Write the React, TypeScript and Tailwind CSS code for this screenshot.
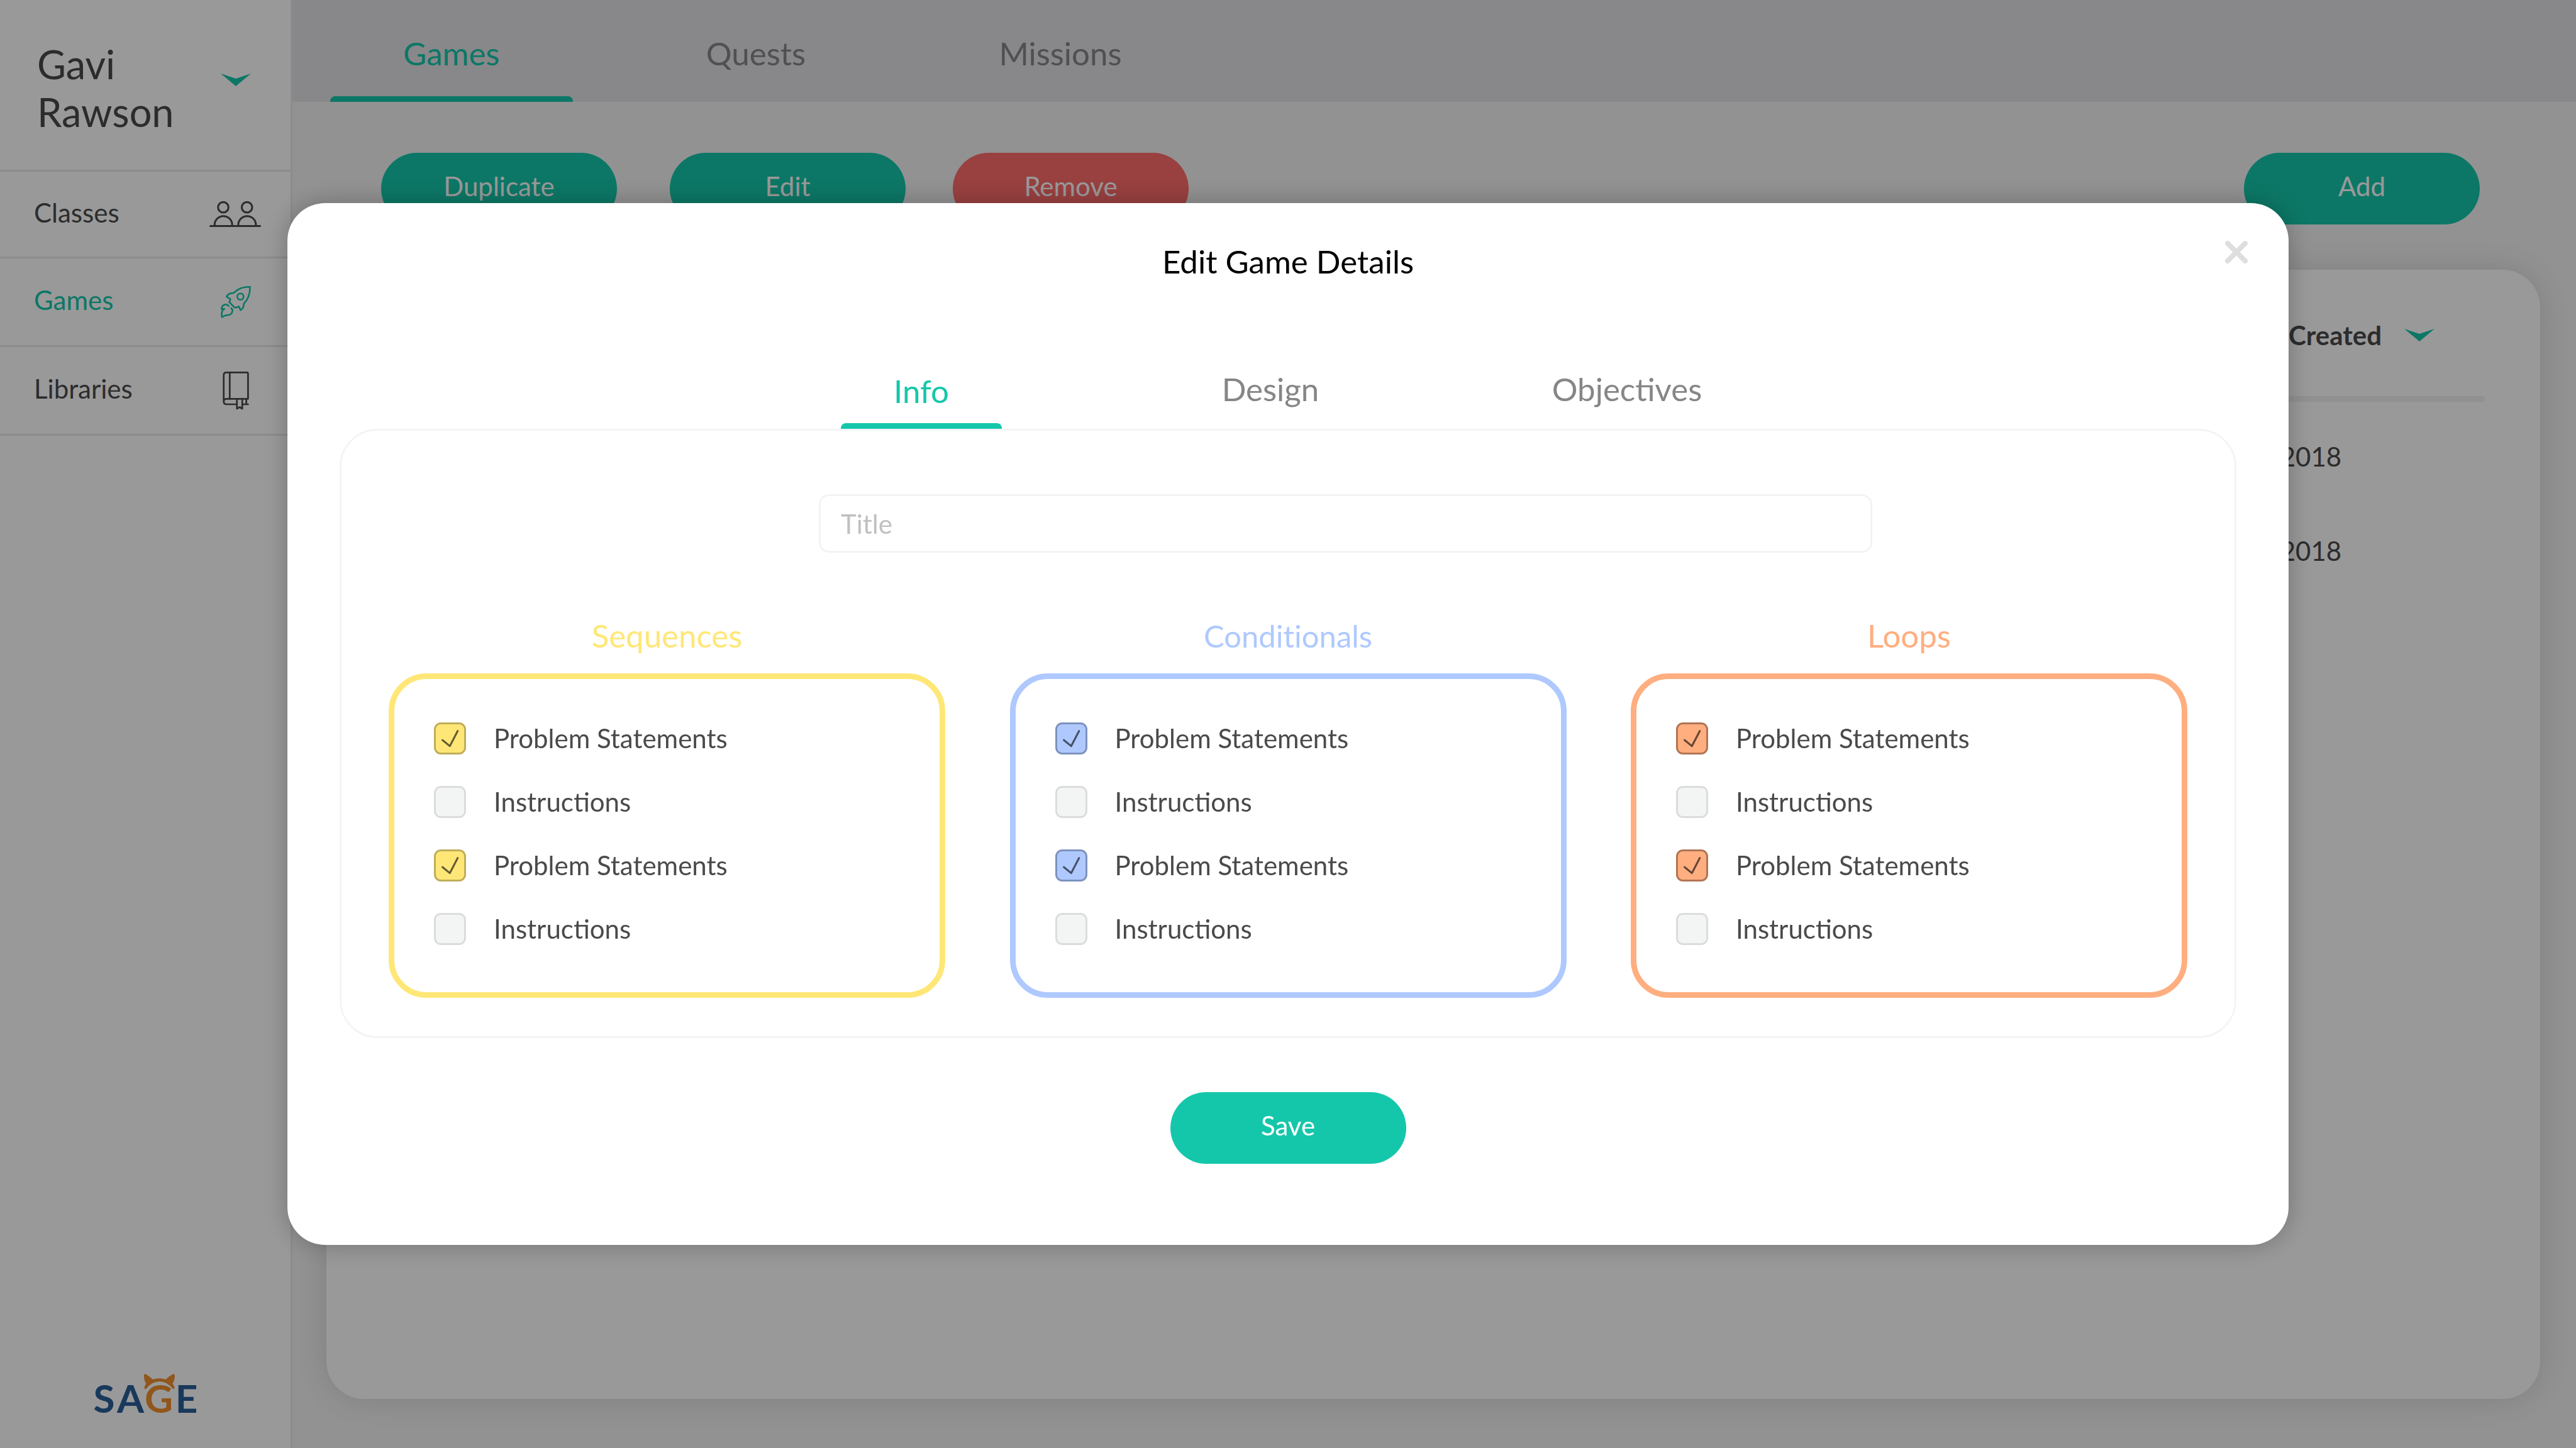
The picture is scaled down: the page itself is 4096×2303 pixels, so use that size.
import { useId, useState } from "react";

const sidebarLink =
  "flex items-center justify-between border-b-[3px] border-[#e9e9e9] pl-[54px] pr-[47px]";

function Chevron() {
  return (
    <svg width="48" height="20" viewBox="0 0 48 20" aria-hidden="true" className="shrink-0">
      <path d="M0 0 24 8 48 0 24 20Z" fill="#15c7aa" />
    </svg>
  );
}

function UsersIcon() {
  return (
    <svg width="82" height="42" viewBox="0 0 82 42" fill="none" stroke="currentColor" strokeWidth="3" strokeLinecap="round" aria-hidden="true">
      <circle cx="22" cy="9.7" r="8.3" />
      <path d="M8.2 39V37.700a14 14 0 0 1 28 0V39" />
      <circle cx="59.7" cy="9.7" r="8.3" />
      <path d="M45.900 39V37.700a14 14 0 0 1 28 0V39" />
      <path d="M1.500 39.500H80.500" />
    </svg>
  );
}

function RocketIcon() {
  return (
    <svg width="48" height="51" viewBox="0 0 48 51" fill="none" stroke="currentColor" strokeWidth="2.6" strokeLinejoin="round" strokeLinecap="round" aria-hidden="true">
      <path d="M46.500 1.300C46.800 12 44 20.500 36.700 28L36.300 32.300Q35 36 31.700 38.300L28.700 32.300Q26 34.500 22.300 34.300L13.700 25.700L15.300 20.700L9.300 17Q11 13 14.700 12Q17.500 10.700 20.700 11Q24.500 6.800 29 4.700Q36 1.300 46.500 1.300Z" />
      <circle cx="31.300" cy="16.700" r="5" />
      <path d="M12.700 31.700Q10.500 29 7.300 29.300Q1.500 30.500 1.300 36.300H5.700Q2 38.500 2 40.700Q1 45.500 2 49.500Q4.500 47.500 7.300 46.700L14 45.700Q18.500 44 18.700 38L16.700 35" />
    </svg>
  );
}

function BookIcon() {
  return (
    <svg width="42" height="61" viewBox="0 0 42 61" fill="none" stroke="currentColor" strokeWidth="2.7" strokeLinejoin="round" strokeLinecap="round" aria-hidden="true">
      <path d="M1.700 48V6Q1.700 1.400 6 1.400H38.500Q40.400 1.400 40.400 3.500V43.300H6.500Q1.700 43.300 1.700 47.500Q1.700 52 6.500 52H22.700" />
      <path d="M11.300 1.400V43.300" />
      <path d="M22.700 43.500V59L27 56.500L31.200 59V43.500" />
      <path d="M31.200 52H40.400M37.600 43.500V52" />
    </svg>
  );
}

function Logo() {
  return (
    <svg width="168" height="84" viewBox="0 0 168 84" role="img" aria-label="SAGE" fontFamily="Lato" fontWeight="700" fontSize="62" textAnchor="middle">
      <text x="18.500" y="66" fill="#2a6099">S</text>
      <text x="60.500" y="66" fill="#2a6099">A</text>
      <text x="105.500" y="66" fill="#f09030">G</text>
      <text x="149.500" y="66" fill="#2a6099">E</text>
      <path d="M81.800 7Q82 3 85.800 5Q92 9 95.800 13Q106.500 9.600 116.500 13Q121 8 127.500 4.700Q130.500 3.500 130.800 6.500Q131.500 13 127.500 19.700L130.500 25Q130.800 29 128 28Q119 16.300 106.500 16.300Q94 16.300 85.300 28Q82.200 29 82.500 25L85.200 19.700Q81.500 13 81.800 7Z" fill="#f09030" />
    </svg>
  );
}

const pill =
  "h-[114px] w-[375px] rounded-full pb-[9px] text-center text-[42px] leading-[52px] text-white";

const themes = {
  yellow: {
    title: "text-[51px] text-[#ffe777]",
    box: "border-[#ffe777]",
    check: "checked:border-[#bfad59] checked:bg-[#ffe777]",
    tick: "text-[#665c30]",
  },
  blue: {
    title: "text-[49px] text-[#afc9ff]",
    box: "border-[#afc9ff]",
    check: "checked:border-[#7d92bd] checked:bg-[#afc9ff]",
    tick: "text-[#465066]",
  },
  orange: {
    title: "text-[51px] text-[#ffae80]",
    box: "border-[#ffae80]",
    check: "checked:border-[#b07453] checked:bg-[#ffae80]",
    tick: "text-[#664633]",
  },
};

type Theme = (typeof themes)[keyof typeof themes];

function Option({ label, initial, theme }: { label: string; initial: boolean; theme: Theme }) {
  const id = useId();
  const [on, setOn] = useState(initial);
  return (
    <div className="flex h-[51px] items-center gap-[44px]">
      <span className="grid size-[51px] shrink-0">
        <input
          id={id}
          type="checkbox"
          checked={on}
          onChange={() => setOn(!on)}
          className={`col-start-1 row-start-1 size-[51px] appearance-none rounded-[11px] border-[3px] border-[#dcdcdc] bg-[#f3f5f5] ${theme.check}`}
        />
        {on && (
          <svg viewBox="0 0 51 51" aria-hidden="true" fill="none" stroke="currentColor" strokeWidth="3" strokeLinecap="round" strokeLinejoin="round" className={`pointer-events-none col-start-1 row-start-1 size-[51px] ${theme.tick}`}>
            <path d="M13.500 28 25.200 37.700 37.800 13.500" />
          </svg>
        )}
      </span>
      <label htmlFor={id} className="text-[42px] leading-[51px] whitespace-nowrap">
        {label}
      </label>
    </div>
  );
}

function Group({ title, theme }: { title: string; theme: Theme }) {
  return (
    <section className="flex w-[885px] flex-col">
      <h3 className={`mb-[30px] text-center leading-[60px] [font-variant-ligatures:none] ${theme.title}`}>{title}</h3>
      <div className={`flex flex-col gap-[50px] rounded-[60px] border-[9px] px-[63px] pt-[69px] pb-[75px] ${theme.box}`}>
        <Option label="Problem Statements" initial theme={theme} />
        <Option label="Instructions" initial={false} theme={theme} />
        <Option label="Problem Statements" initial theme={theme} />
        <Option label="Instructions" initial={false} theme={theme} />
      </div>
    </section>
  );
}

function Sidebar() {
  return (
    <aside className="flex w-[465px] shrink-0 flex-col border-r-[3px] border-[#e9e9e9] bg-white">
      <div className="flex h-[273px] items-center border-b-[3px] border-[#e9e9e9] pr-[63px] pl-[59px]">
        <h1 className="flex-1 pt-[9px] text-[63px] leading-[76px]">
          Gavi
          <br />
          Rawson
        </h1>
        <button type="button" aria-label="Account menu" className="pb-[16px]">
          <Chevron />
        </button>
      </div>
      <nav className="flex flex-col text-[42px] leading-[52px]">
        <a href="#classes" className={`${sidebarLink} h-[138px]`}>
          <span className="pb-[6px]">Classes</span>
          <UsersIcon />
        </a>
        <a href="#games" className={`${sidebarLink} h-[141px] text-[#15c7aa]`}>
          <span className="pb-[6px]">Games</span>
          <span className="pr-[16px]">
            <RocketIcon />
          </span>
        </a>
        <a href="#libraries" className={`${sidebarLink} h-[141px]`}>
          <span className="pb-[6px]">Libraries</span>
          <span className="pr-[19px]">
            <BookIcon />
          </span>
        </a>
      </nav>
      <div className="mt-auto flex justify-center pb-[38px]">
        <Logo />
      </div>
    </aside>
  );
}

function Games() {
  const tab = "flex h-full w-[386px] flex-col items-center justify-end";
  return (
    <div className="flex min-w-0 flex-1 flex-col bg-[#f3f3f3]">
      <nav className="flex h-[162px] gap-[98px] bg-[#e3e3e7] pl-[60px] text-[51px] leading-[60px] text-[#868688]">
        <a href="#games" className={`${tab} text-[#15c7aa]`}>
          <span className="pb-[38px]">Games</span>
          <span className="h-[9px] w-full rounded-t-[8px] bg-[#15c7aa]" />
        </a>
        <a href="#quests" className={`${tab} pb-[47px]`}>Quests</a>
        <a href="#missions" className={`${tab} pb-[47px]`}>Missions</a>
      </nav>
      <div className="mt-[81px] flex pr-[153px] pl-[141px]">
        <button type="button" className={`${pill} bg-[#15c7aa]`}>Duplicate</button>
        <button type="button" className={`${pill} ml-[84px] bg-[#15c7aa]`}>Edit</button>
        <button type="button" className={`${pill} ml-[75px] bg-[#ff6b6b]`}>Remove</button>
        <button type="button" className={`${pill} ml-auto bg-[#15c7aa]`}>Add</button>
      </div>
      <main className="mt-[72px] mr-[57px] mb-[78px] ml-[54px] flex-1 rounded-[60px] bg-white px-[88px] shadow-[0_0_50px_rgba(0,20,10,0.12)]">
        <table className="w-full text-[42px] leading-[52px]">
          <thead>
            <tr className="h-[201px]">
              <th scope="col" className="p-0 text-left font-bold">Name</th>
              <th scope="col" className="w-[460px] p-0 pt-[6px] font-bold">
                <span className="flex items-center justify-end gap-[36px] pr-[80px]">
                  Date Created
                  <Chevron />
                </span>
              </th>
            </tr>
          </thead>
          <tbody>
            <tr>
              <td colSpan={2} className="p-0 pb-[12px]">
                <div className="h-[9px] rounded-full bg-[#f0f0f0]" />
              </td>
            </tr>
            <tr className="h-[150px]">
              <td className="p-0">Introduction to Sequences</td>
              <td className="p-0">May 4, 2018</td>
            </tr>
            <tr className="h-[150px]">
              <td className="p-0">Introduction to Loops</td>
              <td className="p-0">May 4, 2018</td>
            </tr>
          </tbody>
        </table>
      </main>
    </div>
  );
}

function EditGame() {
  const tab = "flex flex-col items-center justify-end";
  return (
    <div className="fixed inset-0 flex items-center bg-black/40 px-[457px]">
      <div role="dialog" aria-modal="true" aria-labelledby="dialog-title" className="relative flex w-full flex-col rounded-[60px] bg-white px-[83px] pt-[63px] pb-[129px] shadow-[0_0_40px_rgba(0,0,0,0.25)]">
        <button type="button" aria-label="Close" className="absolute top-[60px] right-[65px]">
          <svg width="36" height="36" viewBox="0 0 36 36" stroke="#dedede" strokeWidth="8" strokeLinecap="round" aria-hidden="true">
            <path d="M4 4 32 32M32 4 4 32" />
          </svg>
        </button>
        <h2 id="dialog-title" className="text-center text-[51px] leading-[60px] text-black">Edit Game Details</h2>
        <div role="tablist" className="flex h-[236px] gap-[299px] pl-[797px] text-[51px] leading-[60px] text-[#868688]">
          <button type="button" role="tab" aria-selected="true" className={`${tab} w-[256px] text-[#15c7aa]`}>
            <span className="pb-[21px]">Info</span>
            <span className="h-[9px] w-full rounded-t-[8px] bg-[#15c7aa]" />
          </button>
          <button type="button" role="tab" aria-selected="false" className={`${tab} w-[256px] pb-[33px]`}>Design</button>
          <button type="button" role="tab" aria-selected="false" className={`${tab} w-[280px] pb-[33px]`}>Objectives</button>
        </div>
        <div role="tabpanel" className="flex flex-col rounded-[60px] border-[3px] border-[#f3f5f5] px-[75px] pt-[101px] pb-[61px]">
          <input
            type="text"
            aria-label="Title"
            placeholder="Title"
            className="mr-[501px] ml-[684px] h-[93px] rounded-[16px] border-[3px] border-[#f2f4f4] px-[32px] text-[42px] placeholder:text-[#c0c0c0] placeholder:opacity-100"
          />
          <div className="mt-[102px] flex justify-between">
            <Group title="Sequences" theme={themes.yellow} />
            <Group title="Conditionals" theme={themes.blue} />
            <Group title="Loops" theme={themes.orange} />
          </div>
        </div>
        <button type="button" className={`${pill} mt-[86px] self-center bg-[#15c7aa]`}>Save</button>
      </div>
    </div>
  );
}

export default function App() {
  return (
    <div className="flex min-h-screen w-full font-['Lato',sans-serif] text-[#4a4a4b]">
      <Sidebar />
      <Games />
      <EditGame />
    </div>
  );
}
